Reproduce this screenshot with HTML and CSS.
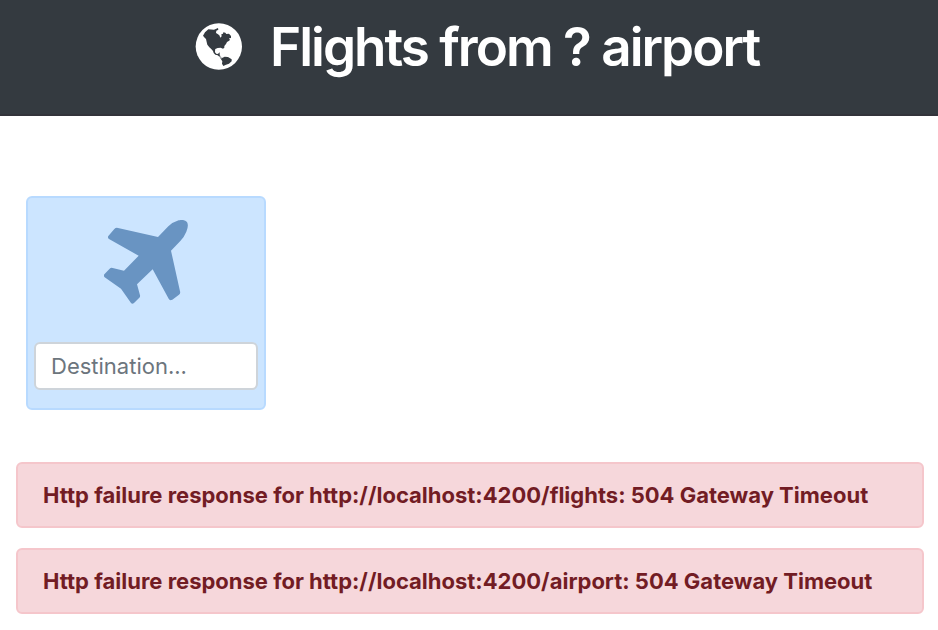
FILE: index.html
```html
<!DOCTYPE html>
<html lang="en">
<head>
<meta charset="utf-8">
<title>Flights</title>
<link rel="stylesheet" href="styles.css">
</head>
<body>
<header class="header">
  <svg class="globe" viewBox="30 40 141 141" aria-hidden="true">
    <circle cx="101.500" cy="110.500" r="69.500" fill="#fff"/>
    <path fill="#343a40" d="M54 78L60 68L70 59L87 60L99 55L100 60L94 63L93 70L98 73L103 77L106 84L110 80L109 74L114 72L115 68L121 69L124 73L132 72L138 79L138 85L132 86L135 91L130 95L126 97L123 103L118 109L118 114L114 117L107 114L98 115L91 118L90 127L94 132L99 132L104 128L104 135L107 140L111 145L119 141L129 142L140 149L140 155L132 162L123 165L115 169L111 162L112 155L108 149L104 142L98 137L91 135L86 130L84 124L78 117L73 113L67 105L65 97L63 88L59 84Z"/>
    <path fill="#fff" d="M106 57L118 57L117 64L110 68L105 63ZM98 118L105 116L108 120L107 126L102 127L99 132L93 131L91 127L92 119Z"/>
    <path fill="#fff" d="M106 132L112 143L109 148L103 142Z" opacity=".55"/>
  </svg>
  <h1 class="title">Flights from ? airport</h1>
</header>
<main class="content">
  <section class="card">
    <svg class="plane" viewBox="42 45 252 252" aria-hidden="true">
      <path fill="#6994c2" d="M204 96L235 64Q249 51 266 46Q283 42 291 51Q297 62 289 80Q283 95 271 108L243 137L270 259Q272 265 267 269L247 284Q239 288 236 281L188 193L141 238L150 271Q151 275 148 278L132 294Q127 299 123 294L93 251L44 217Q40 213 43 208L59 191Q63 187 68 189L102 197L146 152L57 102Q52 98 55 93L73 72Q78 67 84 69Z"/>
    </svg>
    <input class="destination" type="text" placeholder="Destination..." aria-label="Destination">
  </section>
  <div class="alerts">
    <div class="alert"><span class="flights">Http failure response for http://localhost:4200/flights: 504 Gateway Timeout</span></div>
    <div class="alert"><span>Http failure response for http://localhost:4200/airport: 504 Gateway Timeout</span></div>
  </div>
</main>
</body>
</html>
```

FILE: styles.css
```css
* { box-sizing: border-box; }
body {
  margin: 0;
  background: #fff;
  font-family: Inter, "Liberation Sans", sans-serif;
}
.header {
  display: flex;
  align-items: flex-start;
  height: 116px;
  padding: 15px 0 0 195px;
  background: #343a40;
  border-bottom: 2px solid #32333a;
}
.globe {
  flex: none;
  width: 47px;
  height: 47px;
  margin-top: 8px;
}
.title {
  margin: 0 0 0 28px;
  color: #fff;
  font-size: 53px;
  font-weight: 600;
  line-height: 64px;
  letter-spacing: -2px;
  white-space: nowrap;
}
.content { padding: 80px 14px 0 16px; }
.card {
  display: flex;
  flex-direction: column;
  align-items: center;
  width: 240px;
  height: 214px;
  margin-left: 10px;
  padding: 22px 6px 0;
  background: #cce5ff;
  border: 2px solid #b8daff;
  border-radius: 6px;
}
.plane { width: 84px; height: 84px; }
.destination {
  width: 224px;
  height: 48px;
  margin-top: 38px;
  padding: 0 15px;
  background: #fff;
  border: 2px solid #ced4da;
  border-radius: 6px;
  font: 400 22px Inter, "Liberation Sans", sans-serif;
}
.destination::placeholder { color: #6c757d; opacity: 1; }
.alerts {
  display: flex;
  flex-direction: column;
  gap: 20px;
  margin-top: 52px;
}
.alert {
  height: 66px;
  padding: 0 25px;
  background: #f6d7db;
  border: 2px solid #f5c6cb;
  border-radius: 6px;
  color: #721c24;
  font-size: 22px;
  font-weight: 700;
  line-height: 62px;
  white-space: nowrap;
}
```
